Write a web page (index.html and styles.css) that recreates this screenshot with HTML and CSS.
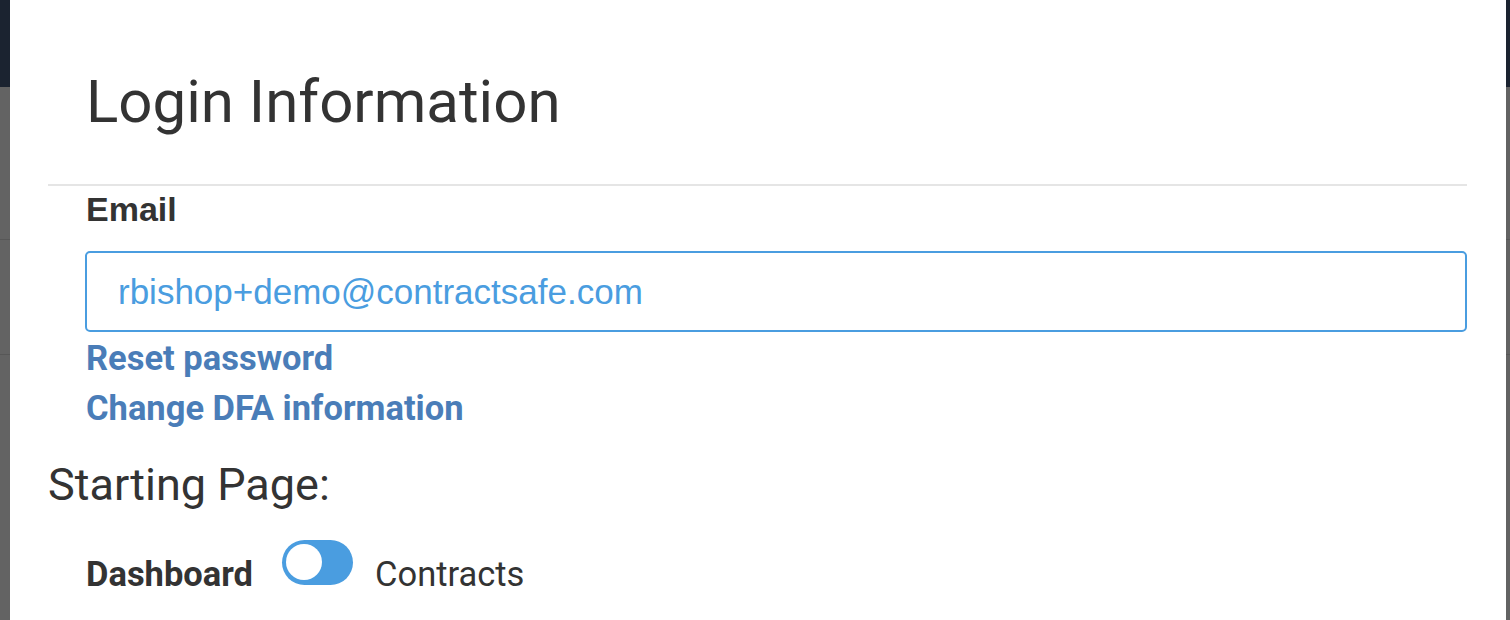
FILE: index.html
```html
<!DOCTYPE html>
<html lang="en">
<head>
  <meta charset="UTF-8">
  <meta name="viewport" content="width=device-width, initial-scale=1.0">
  <title>Login Information</title>
  <link rel="stylesheet" href="styles.css">
</head>
<body>

<div id="page">
  <div id="topbar"></div>
  <div id="content">
    <div class="row-line first"></div>
    <div class="row-line"></div>
  </div>
</div>

<div id="modal">
  <h1 class="modal-title">Login Information</h1>
  <div class="modal-body">
    <div class="field">
      <label for="email">Email</label>
      <input type="text" id="email" value="rbishop+demo@contractsafe.com">
      <a href="#" class="link">Reset password</a>
      <a href="#" class="link">Change DFA information</a>
    </div>

    <h2 class="section-title">Starting Page:</h2>

    <div class="switch-row">
      <span class="switch-label active">Dashboard</span>
      <label class="switch">
        <input type="checkbox">
        <span class="knob"></span>
      </label>
      <span class="switch-label">Contracts</span>
    </div>
  </div>
</div>

</body>
</html>
```

FILE: styles.css
```css
body {
  margin: 0;
  height: 620px;
  overflow: hidden;
  font-family: Roboto, "Liberation Sans", Arial, sans-serif;
  color: #333;
}

#page {
  height: 100%;
  display: flex;
  flex-direction: column;
}

#topbar {
  height: 87px;
  background-color: #1b2330; /* navbar behind the modal */
}

#content {
  flex-grow: 1;
  background-color: #636363; /* dimmed page */
  padding-top: 152px;
}

.row-line {
  height: 1px;
  background-color: #575757;
  margin-bottom: 114px;
}

/* modal lies over the page */
#modal {
  position: absolute;
  top: 0;
  left: 10px;
  width: 1496px;
  height: 620px;
  background-color: #fff;
  box-sizing: border-box;
  padding: 0 39px 0 38px;
}

.modal-title {
  margin: 0;
  padding: 64px 0 45px 38px;
  font-size: 60px;
  font-weight: 400;
  line-height: 75px;
  border-bottom: 2px solid #e5e5e5;
}

.field {
  display: flex;
  flex-direction: column;
  padding-left: 38px;
}

.field label {
  font-family: "Liberation Sans", Arial, sans-serif;
  font-weight: 700;
  font-size: 34px;
  line-height: 46px;
  margin-bottom: 19px;
}

.field input {
  height: 81px;
  box-sizing: border-box;
  border: 2px solid #4a9de0;
  border-radius: 5px;
  padding: 0 31px;
  margin: 0 0 1px -1px;
  font-family: "Liberation Sans", Arial, sans-serif;
  font-size: 35px;
  color: #4a9de0;
  outline: none;
}

.link {
  font-size: 34.5px;
  font-weight: 700;
  line-height: 50px;
  color: #4a7db8;
  text-decoration: none;
}

.section-title {
  margin: 22px 0 0;
  font-size: 45px;
  font-weight: 400;
  line-height: 60px;
}

.switch-row {
  display: flex;
  align-items: center;
  padding-left: 38px;
  margin-top: 25px;
}

.switch-label {
  font-size: 34.5px;
  line-height: 50px;
}

.switch-label.active {
  font-weight: 700;
}

.switch {
  position: relative;
  width: 71px;
  height: 45px;
  margin: 0 22px 22px 29px;
}

.switch input {
  display: none;
}

.knob {
  display: block;
  width: 100%;
  height: 100%;
  border-radius: 23px;
  background-color: #4a9de0;
}

.knob::before {
  content: "";
  position: absolute;
  left: 4px;
  top: 4px;
  width: 36px;
  height: 36px;
  border-radius: 50%;
  background-color: #fff;
}
```
